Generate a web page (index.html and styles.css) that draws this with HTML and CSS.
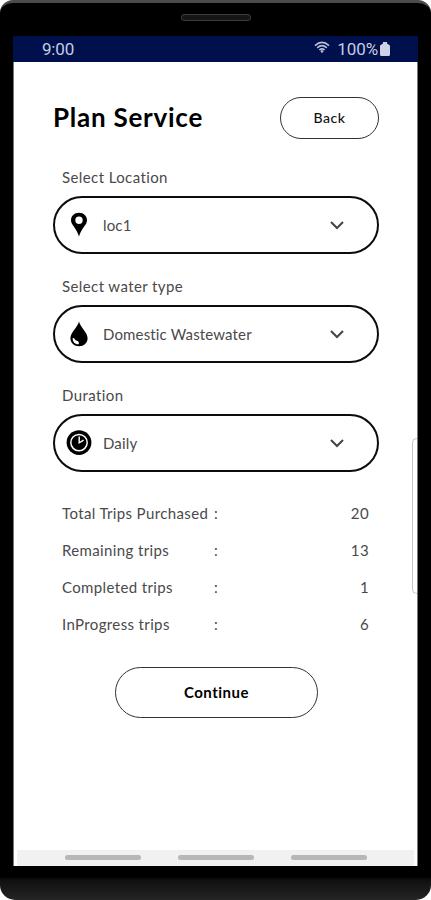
FILE: index.html
```html
<!doctype html>
<html lang="en">
<head>
	<meta charset="UTF-8">
	<title>Plan Service</title>
	<link rel="stylesheet" href="styles.css">
</head>
<body>
<div class="phone">
	<div class="speaker"></div>
	<div class="screen">
		<div class="status">
			<span class="time">9:00</span>
			<svg class="wifi" width="16" height="13" viewBox="0 0 16 13" fill="none" stroke="#b9bfd9" stroke-width="1.6">
				<path d="M1 4.6Q8 -1.8 15 4.6M3.2 6.8Q8 2.4 12.8 6.8M5.4 9Q8 6.6 10.6 9"/>
				<path d="M6.3 10L8 9L9.7 10L8 12.2Z" fill="#b9bfd9" stroke="none"/>
			</svg>
			<span class="percent">100%</span>
			<svg class="battery" width="10" height="14" viewBox="0 0 10 14"><path d="M3 0H7V1.6L10 3.6V12.5Q10 14 8.5 14H1.5Q0 14 0 12.5V3.6L3 1.6Z" fill="#ced2e5"/></svg>
		</div>
		<div class="content">
			<div class="header">
				<h1>Plan Service</h1>
				<button class="btn back">Back</button>
			</div>

			<div class="label">Select Location</div>
			<div class="select">
				<svg class="icon" width="26" height="26" viewBox="0 0 26 26"><path fill-rule="evenodd" d="M13 .8C8.3 .8 5 4.1 5 8.3C5 13 10.8 16.5 13 24.5C15.2 16.5 21 13 21 8.3C21 4.1 17.7 .8 13 .8ZM13 4.5A3.7 3.7 0 1 1 13 11.9A3.7 3.7 0 1 1 13 4.5Z"/></svg>
				<span class="value">loc1</span>
				<svg class="arrow" width="14" height="9" viewBox="0 0 14 9"><path d="M1 1L7 7L13 1"/></svg>
			</div>

			<div class="label">Select water type</div>
			<div class="select">
				<svg class="icon" width="26" height="26" viewBox="0 0 26 26"><path d="M13 .5C11.5 6.5 4.4 11.5 4.4 17.3C4.4 21.9 8.2 25.3 13 25.3C17.8 25.3 21.6 21.9 21.6 17.3C21.6 11.5 14.5 6.5 13 .5Z"/><path d="M6.7 17C8.4 16.5 8.8 19.2 10.9 19.7C12.7 20.1 13.5 22 12.6 23.3C9 23.5 6.3 20.6 6.7 17Z" fill="#fff"/></svg>
				<span class="value">Domestic Wastewater</span>
				<svg class="arrow" width="14" height="9" viewBox="0 0 14 9"><path d="M1 1L7 7L13 1"/></svg>
			</div>

			<div class="label">Duration</div>
			<div class="select">
				<svg class="icon" width="26" height="26" viewBox="0 0 26 26"><circle cx="13" cy="12.6" r="12.4"/><circle cx="13" cy="12.6" r="8.2" fill="none" stroke="#fff" stroke-width="1.5"/><path d="M13.2 6.5V12.8L17.6 10.2" fill="none" stroke="#fff" stroke-width="1.4"/></svg>
				<span class="value">Daily</span>
				<svg class="arrow" width="14" height="9" viewBox="0 0 14 9"><path d="M1 1L7 7L13 1"/></svg>
			</div>

			<div class="trips">
				<div class="row"><span class="name">Total Trips Purchased</span><span>:</span><span class="num">20</span></div>
				<div class="row"><span class="name">Remaining trips</span><span>:</span><span class="num">13</span></div>
				<div class="row"><span class="name">Completed trips</span><span>:</span><span class="num">1</span></div>
				<div class="row"><span class="name">InProgress trips</span><span>:</span><span class="num">6</span></div>
			</div>
			<button class="btn continue">Continue</button>
		</div>
		<div class="nav"><i></i><i></i><i></i></div>
		<div class="edge"></div>
	</div>
</div>
</body>
</html>
```

FILE: styles.css
```css
*{margin:0; padding:0; box-sizing:border-box;}
body{background:#fff; overflow:hidden; font-family:Lato, sans-serif; font-size:15px; color:#4a4a4a;}

.phone{
	width:431px;
	height:900px;
	padding:11px 13px 0;
	border-top:3px solid #4b4b4b;
	border-radius:13px 13px 15px 15px;
	background:linear-gradient(#000 0, #000 874px, #101010 877px, #202020 893px, #262626 897px);
}
.speaker{
	width:70px;
	height:7px;
	margin:0 auto 15px;
	border:1px solid #3c3c3c;
	border-radius:3px;
	background:#151515;
}
.screen{
	position:relative;
	display:flex;
	flex-direction:column;
	height:830px;
	background:#fff;
	border-left:1px solid #777;
	border-right:1px solid #777;
}

/*status bar*/
.status{
	display:flex;
	align-items:center;
	height:26px;
	margin:0 -1px;
	padding:0 28px 0 29px;
	background:#00104c;
	color:#c6cbe1;
	font:17px/26px Roboto, sans-serif;
}
.time{flex:1; letter-spacing:-.2px;}
.wifi{margin:-4px 7px 0 0;}
.percent{letter-spacing:-.1px;}
.battery{margin:-1px 0 0 2px;}

.content{
	flex:1;
	padding:35px 38px 0 39px;
}
.header{
	display:flex;
	align-items:center;
	justify-content:space-between;
	height:42px;
	margin-bottom:28px;
}
h1{margin-top:-2px; font-size:26px; font-weight:700; color:#000; letter-spacing:.75px;}
.btn{
	display:block;
	background:#fff;
	border:1px solid #333;
	font-family:Lato, sans-serif;
	color:#111;
}
.back{width:99px; height:42px; padding-bottom:2px; border-radius:21px; font-size:14px; font-weight:500; letter-spacing:.5px;}
.continue{width:203px; height:51px; margin:24px auto 0 62px; padding-bottom:2px; border-radius:26px; font-size:15px; font-weight:700; letter-spacing:.5px; color:#000;}

.label{height:20px; line-height:20px; padding-left:9px; margin-bottom:9px; letter-spacing:.4px;}
.select{
	display:flex;
	align-items:center;
	height:58px;
	margin-bottom:22px;
	padding:0 33px 0 11px;
	border:2px solid #0c0c0c;
	border-radius:29px;
}
.icon{fill:#000;}
.value{flex:1; margin-left:11px; letter-spacing:.15px;}
.arrow{fill:none; stroke:#444; stroke-width:2;}

.trips{padding:1px 10px 0 9px;}
.row{display:flex; height:37px; line-height:37px; letter-spacing:.37px;}
.name{width:152px; white-space:nowrap;}
.num{flex:1; text-align:right;}

.nav{
	display:flex;
	gap:37px;
	height:16px;
	margin:0 3px;
	padding:5px 0 0 48px;
	background:#f1f1f1;
}
.nav i{width:76px; height:5px; border-radius:3px; background:#b7b7b7;}

/*edge panel handle*/
.edge{
	position:absolute;
	top:402px;
	right:0;
	width:5px;
	height:156px;
	border:1px solid #c4c4c4;
	border-right:none;
	border-radius:5px 0 0 5px;
}
```
